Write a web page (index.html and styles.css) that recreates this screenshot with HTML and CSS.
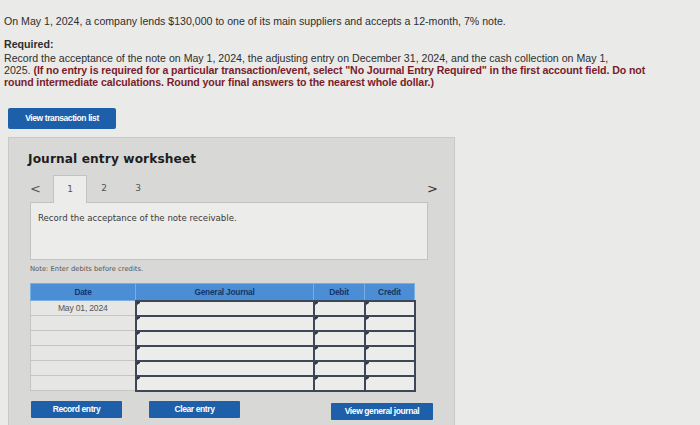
FILE: index.html
```html
<!DOCTYPE html>
<html>
<head>
<meta charset="utf-8">
<link rel="stylesheet" href="styles.css">
</head>
<body>
<div class="intro">
  <p class="q">On May 1, 2024, a company lends $130,000 to one of its main suppliers and accepts a 12-month, 7% note.</p>
  <p class="req-h">Required:</p>
  <p class="req">Record the acceptance of the note on May 1, 2024, the adjusting entry on December 31, 2024, and the cash collection on May 1,<br>2025. <b class="red">(If no entry is required for a particular transaction/event, select "No Journal Entry Required" in the first account field. Do not<br>round intermediate calculations. Round your final answers to the nearest whole dollar.)</b></p>
</div>
<div class="list-row"><button class="btn btn-list">View transaction list</button></div>
<section class="panel">
  <h2 class="title">Journal entry worksheet</h2>
  <div class="tabs">
    <span class="arrow">&lt;</span>
    <span class="tab active">1</span>
    <span class="tab">2</span>
    <span class="tab">3</span>
    <span class="arrow next">&gt;</span>
  </div>
  <div class="box">Record the acceptance of the note receivable.</div>
  <p class="note">Note: Enter debits before credits.</p>
  <table class="journal">
    <thead>
      <tr><th class="c-date">Date</th><th class="c-gj">General Journal</th><th class="c-dr">Debit</th><th class="c-cr">Credit</th></tr>
    </thead>
    <tbody>
      <tr><td class="d">May 01, 2024</td><td class="in"></td><td class="in"></td><td class="in"></td></tr>
      <tr><td class="d"></td><td class="in"></td><td class="in"></td><td class="in"></td></tr>
      <tr><td class="d"></td><td class="in"></td><td class="in"></td><td class="in"></td></tr>
      <tr><td class="d"></td><td class="in"></td><td class="in"></td><td class="in"></td></tr>
      <tr><td class="d"></td><td class="in"></td><td class="in"></td><td class="in"></td></tr>
      <tr><td class="d"></td><td class="in"></td><td class="in"></td><td class="in"></td></tr>
    </tbody>
  </table>
  <div class="actions">
    <button class="btn btn-act">Record entry</button>
    <button class="btn btn-act btn-clear">Clear entry</button>
    <button class="btn btn-act btn-view">View general journal</button>
  </div>
</section>
</body>
</html>
```

FILE: styles.css
```css
html, body {
  margin: 0;
  padding: 0;
  background: #eaeae8;
  height: 425px;
  overflow: hidden;
}
body {
  font-family: "Liberation Sans", Arial, sans-serif;
  color: #2e2e2e;
}
.intro {
  padding: 15px 0 0 4px;
  font-size: 10.6px;
  letter-spacing: 0;
  line-height: 12px;
}
.intro p { margin: 0; }
.q { margin-bottom: 11px !important; }
.req-h { font-weight: bold; margin-bottom: 2px !important; }
.req { line-height: 12px; }
.red { color: #7b1c2c; font-weight: bold; letter-spacing: -0.1px; }

.btn {
  border: none;
  background: #1d5fa8;
  color: #fff;
  font-family: "Liberation Sans", Arial, sans-serif;
  font-weight: bold;
  font-size: 8.5px;
  letter-spacing: -0.4px;
  padding: 0;
  border-radius: 2px;
}
.list-row { padding: 19px 0 0 8px; }
.btn-list { width: 108px; height: 21px; }

.panel {
  margin: 8px 0 0 8px;
  width: 447px;
  height: 300px;
  background: #d8d8d6;
  border: 1px solid #c9c9c7;
  box-sizing: border-box;
  padding: 13px 0 0 21px;
}
.title {
  margin: 0 0 0 -2px;
  font-family: "DejaVu Sans", Verdana, sans-serif;
  font-weight: bold;
  font-size: 12.2px;
  color: #1e1e1e;
  line-height: 16px;
  letter-spacing: 0.1px;
}
.tabs {
  margin-top: 8px;
  height: 27px;
  display: flex;
  align-items: stretch;
  font-family: "DejaVu Sans", Verdana, sans-serif;
  font-size: 9px;
  color: #555;
  position: relative;
}
.arrow {
  width: 23px;
  padding-left: 0;
  box-sizing: border-box;
  display: flex;
  align-items: center;
  font-size: 13px;
  color: #555;
}
.tab {
  width: 34px;
  display: flex;
  align-items: center;
  justify-content: center;
}
.tab.active {
  background: #ececea;
  border: 1px solid #c2c2c0;
  border-bottom: none;
  box-sizing: border-box;
  margin-bottom: -1px;
  position: relative;
  z-index: 1;
}
.arrow.next {
  position: absolute;
  left: 397px;
  top: 0;
  height: 27px;
  color: #333;
}
.box {
  width: 398px;
  height: 58px;
  box-sizing: border-box;
  background: #ececea;
  border: 1px solid #c2c2c0;
  font-family: "DejaVu Sans", Verdana, sans-serif;
  font-size: 8.6px;
  color: #3a3a3a;
  padding: 10px 0 0 7px;
}
.note {
  margin: 4px 0 0 0;
  font-family: "DejaVu Sans", Verdana, sans-serif;
  font-size: 6.8px;
  color: #555;
  line-height: 10px;
}
.journal {
  margin-top: 9px;
  border-collapse: collapse;
  table-layout: fixed;
  width: 380px;
}
.journal th {
  background: #4b8ed5;
  color: #153569;
  font-size: 8.3px;
  font-weight: bold;
  height: 16px;
  padding: 0;
  border: 1px solid #79aee2;
  letter-spacing: -0.2px;
}
.c-date { width: 104px; }
.c-gj { width: 177px; }
.c-dr { width: 50px; }
.c-cr { width: 49px; }
.journal tbody tr { height: 15px; }
.journal td {
  padding: 0;
  line-height: 10px;
}
.journal td.d {
  background: #e6e6e4;
  border: 1px solid #c5c5c3;
  text-align: center;
  font-size: 8.6px;
  color: #555;
  letter-spacing: -0.2px;
}
.journal td.in {
  background: #ececea;
  border: 2px solid #3d4756;
  position: relative;
}
.journal td.in::before {
  content: "";
  position: absolute;
  left: 0;
  top: 0;
  border-left: 3px solid #2c3644;
  border-bottom: 2px solid transparent;
  border-top: 1px solid #2c3644;
}
.actions {
  margin-top: 9px;
  display: flex;
  padding-left: 1px;
}
.btn-act {
  width: 91px;
  height: 17px;
  border-radius: 1px;
}
.btn-clear { margin-left: 27px; }
.btn-view { width: 102px; margin-left: 91px; margin-top: 2px; }
```
